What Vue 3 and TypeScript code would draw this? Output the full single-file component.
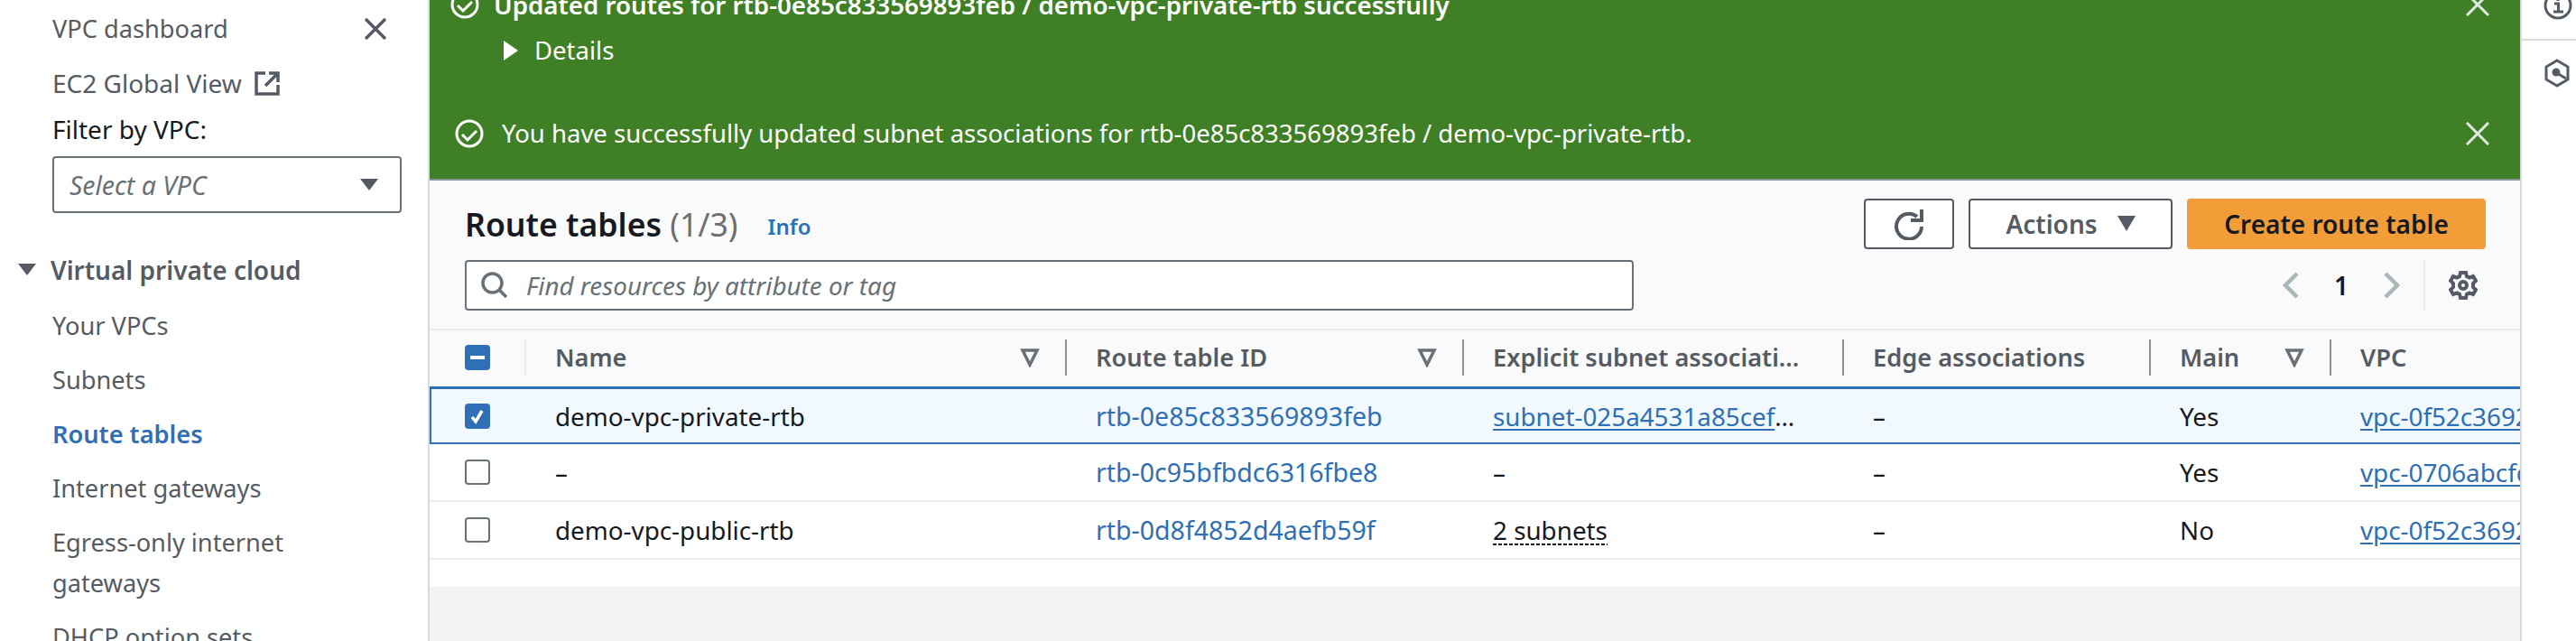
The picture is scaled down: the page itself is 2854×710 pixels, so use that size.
<script setup lang="ts">
interface RouteRow {
  name: string
  id: string
  subnet: string
  subnetKind: 'link' | 'popover' | 'none'
  main: string
  vpc: string
  selected: boolean
}

const navItems = [
  { label: 'Your VPCs', active: false },
  { label: 'Subnets', active: false },
  { label: 'Route tables', active: true },
  { label: 'Internet gateways', active: false },
  { label: 'Egress-only internet gateways', active: false },
  { label: 'DHCP option sets', active: false }
]

const rows: RouteRow[] = [
  { name: 'demo-vpc-private-rtb', id: 'rtb-0e85c833569893feb', subnet: 'subnet-025a4531a85cef7d1', subnetKind: 'link', main: 'Yes', vpc: 'vpc-0f52c3692e1ab', selected: true },
  { name: '–', id: 'rtb-0c95bfbdc6316fbe8', subnet: '–', subnetKind: 'none', main: 'Yes', vpc: 'vpc-0706abcfd12e4', selected: false },
  { name: 'demo-vpc-public-rtb', id: 'rtb-0d8f4852d4aefb59f', subnet: '2 subnets', subnetKind: 'popover', main: 'No', vpc: 'vpc-0f52c3692e1ab', selected: false }
]

const columns = [
  { label: 'Name', sort: true },
  { label: 'Route table ID', sort: true },
  { label: 'Explicit subnet associations', sort: false },
  { label: 'Edge associations', sort: false },
  { label: 'Main', sort: true },
  { label: 'VPC', sort: false }
]
</script>

<template>
  <div class="page">
    <aside class="sidebar">
      <div class="side-top">
        <a class="nav-link">VPC dashboard</a>
        <svg class="side-close" viewBox="0 0 26 26"><path d="M2 2l22 22M24 2L2 24" /></svg>
      </div>
      <div class="global-view">
        <a class="nav-link">EC2 Global View</a>
        <svg class="ext-icon" viewBox="0 0 28 28">
          <path d="M12 3H2v23h24V16" />
          <path d="M12 17L25 4M16 3h10v10" />
        </svg>
      </div>
      <div class="filter-label">Filter by VPC:</div>
      <div class="vpc-select">
        <span>Select a VPC</span>
        <svg class="select-caret" viewBox="0 0 20 14"><path d="M0 0h20L10 13z" /></svg>
      </div>
      <div class="section-title">
        <svg class="section-caret" viewBox="0 0 20 14"><path d="M0 0h20L10 13z" /></svg>
        <span>Virtual private cloud</span>
      </div>
      <ul class="nav-list">
        <li v-for="item in navItems" :key="item.label" :class="{ active: item.active }">{{ item.label }}</li>
      </ul>
    </aside>

    <main class="content">
      <section class="flashbar">
        <div class="flash-line first">
          <svg class="ok-icon" viewBox="0 0 32 32">
            <circle cx="16" cy="16" r="14" />
            <path d="M8 17l6 6 10-10" />
          </svg>
          <strong>Updated routes for rtb-0e85c833569893feb / demo-vpc-private-rtb successfully</strong>
          <svg class="flash-close" viewBox="0 0 26 26"><path d="M1 1l24 24M25 1L1 25" /></svg>
        </div>
        <div class="details">
          <svg class="details-caret" viewBox="0 0 16 22"><path d="M0 0l16 11L0 22z" /></svg>
          <span>Details</span>
        </div>
        <div class="flash-line second">
          <svg class="ok-icon" viewBox="0 0 32 32">
            <circle cx="16" cy="16" r="14" />
            <path d="M8 17l6 6 10-10" />
          </svg>
          <span>You have successfully updated subnet associations for rtb-0e85c833569893feb / demo-vpc-private-rtb.</span>
          <svg class="flash-close" viewBox="0 0 26 26"><path d="M1 1l24 24M25 1L1 25" /></svg>
        </div>
      </section>

      <section class="table-head">
        <div class="title-row">
          <h1>Route tables <span class="count">(1/3)</span></h1>
          <a class="info">Info</a>
          <div class="actions">
            <button class="btn refresh">
              <svg viewBox="0 0 34 36">
                <path d="M26 10A14 14 0 1 0 31 21" />
                <path d="M19 14h12V2" />
              </svg>
            </button>
            <button class="btn actions-btn">
              Actions
              <svg viewBox="0 0 20 18"><path d="M0 0h20L10 17z" /></svg>
            </button>
            <button class="btn primary">Create route table</button>
          </div>
        </div>
        <div class="search-row">
          <div class="search">
            <svg viewBox="0 0 30 30">
              <circle cx="12.5" cy="12.5" r="10.5" />
              <path d="M20 20l8 8" />
            </svg>
            <span>Find resources by attribute or tag</span>
          </div>
          <div class="pager">
            <svg class="chev" viewBox="0 0 18 30"><path d="M16 2L3 15l13 13" /></svg>
            <span class="page-no">1</span>
            <svg class="chev" viewBox="0 0 18 30"><path d="M2 2l13 13L2 28" /></svg>
            <span class="pager-sep"></span>
            <svg class="gear" viewBox="0 0 32 32">
              <path d="M13 2h6l1 4 3 1.500 4-1.500 3 5-3 3v4l3 3-3 5-4-1.500L20 26l-1 4h-6l-1-4-3-1.500L5 26l-3-5 3-3v-4l-3-3 3-5 4 1.500L12 6z" />
              <circle cx="16" cy="16" r="4" />
            </svg>
          </div>
        </div>
      </section>

      <section class="grid-table">
        <div class="grid-row header">
          <div class="check-cell">
            <span class="box on">
              <span class="dash"></span>
            </span>
          </div>
          <div v-for="(col, i) in columns" :key="col.label" class="cell head-cell" :class="{ divided: i > 0, soft: i === 0, nosort: !col.sort }">
            <span class="clip">{{ col.label }}</span>
            <svg v-if="col.sort" class="sort" viewBox="0 0 22 22"><path d="M3 3h16l-8 16z" /></svg>
          </div>
        </div>
        <div v-for="row in rows" :key="row.id" class="grid-row body" :class="{ selected: row.selected }">
          <div class="check-cell">
            <span class="box" :class="{ on: row.selected }">
              <svg v-if="row.selected" viewBox="0 0 28 28"><path d="M8 15l4 5 7-12" /></svg>
            </span>
          </div>
          <div class="cell">{{ row.name }}</div>
          <div class="cell"><a class="blue id">{{ row.id }}</a></div>
          <div class="cell">
            <span class="clip">
              <a v-if="row.subnetKind === 'link'" class="blue under">{{ row.subnet }}</a>
              <span v-else-if="row.subnetKind === 'popover'" class="dotted">{{ row.subnet }}</span>
              <template v-else>{{ row.subnet }}</template>
            </span>
          </div>
          <div class="cell">–</div>
          <div class="cell">{{ row.main }}</div>
          <div class="cell"><a class="blue under">{{ row.vpc }}</a></div>
        </div>
        <div class="table-foot"></div>
      </section>
    </main>

    <aside class="rail">
      <div class="rail-top">
        <svg viewBox="0 0 32 32" class="rail-info">
          <circle cx="16" cy="16" r="14" />
          <path d="M12 14h4.500v9M11 23h11M16 8v3" />
        </svg>
      </div>
      <svg viewBox="0 0 32 32" class="rail-hex">
        <path d="M16 2l12 7v14l-12 7-12-7V9z" />
        <circle class="rail-dot" cx="15" cy="15" r="3" />
        <path d="M16 16l10 6" />
      </svg>
    </aside>
  </div>
</template>

<style scoped>
.page {
  display: flex;
  width: 2854px;
  height: 710px;
  overflow: hidden;
  background: #fff;
  color: #16191f;
  font-family: "Noto Sans", "Open Sans", sans-serif;
  font-size: 28px;
  line-height: 40px;
}
svg {
  display: block;
  flex: none;
  fill: none;
}

/* left nav */
.sidebar {
  width: 476px;
  flex: none;
  box-sizing: border-box;
  padding: 12px 29px 0 58px;
  border-right: 2px solid #d5dbdb;
  color: #545b64;
}
.side-top {
  display: flex;
  justify-content: space-between;
  align-items: center;
  padding-right: 16px;
  font-size: 27.2px;
}
.side-close {
  width: 26px;
  height: 26px;
  stroke: #545b64;
  stroke-width: 3.500;
}
.global-view {
  display: flex;
  align-items: center;
  gap: 14px;
  margin-top: 20px;
}
.ext-icon {
  width: 28px;
  height: 28px;
  stroke: #545b64;
  stroke-width: 3.500;
}
.filter-label {
  margin-top: 11px;
  color: #16191f;
}
.vpc-select {
  display: flex;
  justify-content: space-between;
  align-items: center;
  box-sizing: border-box;
  height: 63px;
  margin-top: 10px;
  padding: 0 24px 0 17px;
  border: 2px solid #687078;
  border-radius: 4px;
  font-style: italic;
  font-size: 28.4px;
  color: #687078;
}
.select-caret,
.section-caret {
  width: 20px;
  height: 14px;
  fill: #545b64;
}
.section-title {
  display: flex;
  align-items: center;
  gap: 16px;
  margin: 43px 0 0 -38px;
  font-weight: 600;
}
.nav-list {
  list-style: none;
  margin: 19px 0 0;
  padding: 0;
  width: 300px;
  font-size: 27.2px;
}
.nav-list li {
  margin-bottom: 15px;
  line-height: 45px;
}
.nav-list li.active {
  color: #2e6fb5;
  font-weight: 600;
}

/* main column */
.content {
  width: 2316px;
  flex: none;
  overflow: hidden;
  background: #f2f3f3;
  display: flex;
  flex-direction: column;
}
.flashbar {
  background: #3f7f25;
  color: #fff;
  margin-top: -15px;
  padding-bottom: 30px;
  border-bottom: 2px solid #879596;
  font-size: 27.5px;
}
.flash-line {
  display: flex;
  align-items: center;
  padding-right: 34px;
}
.flash-line.first {
  padding-left: 23px;
  gap: 16px;
}
.flash-line.second {
  margin-top: 52px;
  padding-left: 28px;
  gap: 20px;
}
.flash-line strong {
  font-size: 27.7px;
  font-weight: 600;
}
.ok-icon {
  width: 32px;
  height: 32px;
  stroke: #fff;
  stroke-width: 3;
}
.flash-close {
  width: 26px;
  height: 26px;
  margin-left: auto;
  stroke: #e4e8e4;
  stroke-width: 3;
}
.details {
  display: flex;
  align-items: center;
  gap: 18px;
  margin-top: 11px;
  padding-left: 82px;
}
.details-caret {
  width: 16px;
  height: 22px;
  fill: #fff;
}

.table-head {
  background: #fafafa;
  padding: 20px 38px 20px 39px;
  border-bottom: 2px solid #eaeded;
}
.title-row {
  display: flex;
  align-items: center;
  height: 56px;
}
.title-row h1 {
  margin: 0;
  font-size: 35.6px;
  line-height: 44px;
  font-weight: 600;
}
.count {
  color: #687078;
  font-weight: 400;
}
.info {
  margin: 6px 0 0 33px;
  font-size: 24px;
  font-weight: 600;
  color: #2e6fb5;
}
.actions {
  display: flex;
  gap: 16px;
  margin-left: auto;
}
.btn {
  display: flex;
  align-items: center;
  justify-content: center;
  box-sizing: border-box;
  height: 56px;
  padding: 0;
  background: #fff;
  border: 2px solid #545b64;
  border-radius: 4px;
  color: #545b64;
  font: 600 28px/40px "Noto Sans", "Open Sans", sans-serif;
}
.refresh {
  width: 100px;
}
.refresh svg {
  width: 34px;
  height: 36px;
  stroke: #545b64;
  stroke-width: 4;
}
.actions-btn {
  width: 226px;
  gap: 22px;
}
.actions-btn svg {
  width: 20px;
  height: 18px;
  fill: #545b64;
}
.primary {
  width: 331px;
  background: #f29d38;
  border-color: #f29d38;
  color: #16191f;
}
.search-row {
  display: flex;
  justify-content: space-between;
  align-items: center;
  margin-top: 12px;
  height: 56px;
}
.search {
  display: flex;
  align-items: center;
  gap: 20px;
  box-sizing: border-box;
  width: 1295px;
  height: 56px;
  padding-left: 16px;
  background: #fff;
  border: 2px solid #687078;
  border-radius: 4px;
  font-style: italic;
  font-size: 27.8px;
  color: #687078;
}
.search svg {
  width: 30px;
  height: 30px;
  stroke: #687078;
  stroke-width: 3.500;
}
.pager {
  display: flex;
  align-items: center;
  height: 56px;
  padding-right: 9px;
}
.chev {
  width: 18px;
  height: 30px;
  stroke: #aab7b8;
  stroke-width: 4.500;
}
.page-no {
  width: 94px;
  text-align: center;
  font-weight: 600;
}
.pager-sep {
  width: 2px;
  height: 56px;
  margin: 0 26px;
  background: #eaeded;
}
.gear {
  width: 32px;
  height: 32px;
  stroke: #545b64;
  stroke-width: 4;
}

/* table */
.grid-table {
  background: #fff;
}
.grid-row {
  display: grid;
  grid-template-columns: 105px 599px 440px 421px 340px 200px 600px;
  align-items: center;
  box-sizing: border-box;
  height: 64px;
  font-size: 27.8px;
}
.grid-row.header {
  height: 62px;
  background: #fafafa;
  padding-bottom: 2px;
  font-size: 27.2px;
}
.grid-row.body {
  border-bottom: 2px solid #eaeded;
}
.grid-row.selected {
  grid-template-columns: 103px 599px 440px 421px 340px 200px 600px;
  background: #f1f8fe;
  border: 2px solid #2e6fb5;
  border-width: 3px 0 2px 2px;
  margin-right: -300px;
}
.check-cell {
  display: flex;
  padding-left: 39px;
}
.selected .check-cell {
  padding-left: 37px;
}
.box {
  display: flex;
  align-items: center;
  justify-content: center;
  box-sizing: border-box;
  width: 28px;
  height: 28px;
  background: #fff;
  border: 2px solid #687078;
  border-radius: 4px;
}
.box.on {
  background: #2e6fb5;
  border-color: #2e6fb5;
}
.box svg {
  position: relative;
  width: 28px;
  height: 28px;
  flex: none;
  stroke: #fff;
  stroke-width: 3.500;
}
.dash {
  width: 16px;
  height: 4px;
  background: #fff;
}
.cell {
  display: flex;
  align-items: center;
  min-width: 0;
  box-sizing: border-box;
  height: 40px;
  padding: 0 44px 0 34px;
  white-space: nowrap;
}
.head-cell {
  color: #545b64;
  font-weight: 600;
  border-left: 2px solid transparent;
  padding-left: 32px;
  padding-right: 28px;
}
.head-cell.nosort {
  padding-right: 38px;
}
.head-cell.divided {
  border-left-color: #879596;
}
.head-cell.soft {
  border-left-color: #eaeded;
}
.clip {
  display: block;
  flex: 1;
  min-width: 0;
  overflow: hidden;
  text-overflow: ellipsis;
  white-space: nowrap;
}
.sort {
  width: 22px;
  height: 22px;
  stroke: #687078;
  stroke-width: 3.500;
}
.blue {
  color: #2e6fb5;
}
.id {
  font-size: 28.5px;
}
.under {
  text-decoration: underline;
  text-underline-offset: 3px;
}
.dotted {
  background: repeating-linear-gradient(90deg, #16191f 0 4px, transparent 4px 6px) left 0 bottom 2px / 100% 2px no-repeat;
}
.table-foot {
  height: 30px;
  background: #fff;
}

/* right rail */
.rail {
  flex: 1;
  min-width: 0;
  box-sizing: border-box;
  border-left: 2px solid #d5dbdb;
  overflow: hidden;
}
.rail-top {
  height: 53px;
  margin-top: -10px;
  padding-left: 24px;
  border-bottom: 2px solid #d5dbdb;
}
.rail-info,
.rail-hex {
  width: 32px;
  height: 32px;
  stroke: #545b64;
  stroke-width: 3;
}
.rail-hex {
  margin: 20px 0 0 23px;
}
.rail-dot {
  fill: #545b64;
}
</style>

<style>
html,
body {
  margin: 0;
  overflow: hidden;
}
</style>
